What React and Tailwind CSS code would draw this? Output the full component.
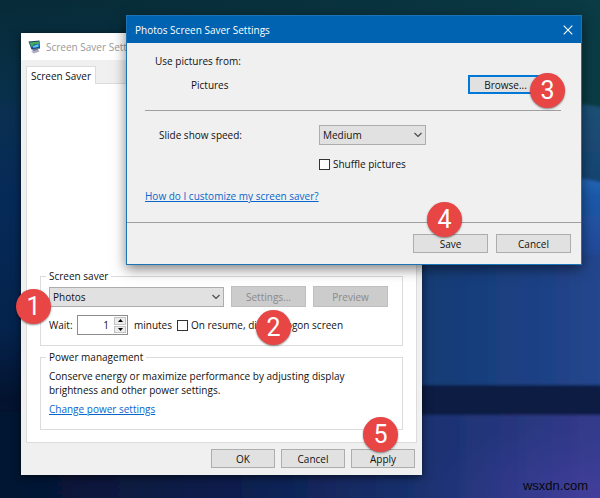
function Badge({ n, className }) {
  return (
    <span
      className={`absolute z-20 flex size-[35px] items-center justify-center rounded-full bg-[#e84545] font-[Roboto,sans-serif] text-[25px] leading-none text-white shadow-[0_1px_2px_rgba(0,0,0,0.45)] ${className}`}
    >
      {n}
    </span>
  );
}

function Button({ children, className = "w-[75px]", ...rest }) {
  return (
    <button
      type="button"
      className={`flex h-[19px] items-center justify-center border border-[#adadad] bg-[#e1e1e1] ${className}`}
      {...rest}
    >
      {children}
    </button>
  );
}

function Select({ id, value, className, ...rest }) {
  return (
    <div className={`relative ${className}`}>
      <select
        id={id}
        defaultValue={value}
        className="block h-5 w-full appearance-none border border-[#adadad] bg-[#e1e1e1] pl-[3px] leading-4"
        {...rest}
      >
        <option>{value}</option>
      </select>
      <svg
        className="pointer-events-none absolute top-[7px] right-1 h-[6px] w-[8px]"
        viewBox="0 0 8 6"
        fill="none"
        stroke="#4b4b4b"
        strokeWidth="1.2"
      >
        <path d="M.5 1 4 4.5 7.5 1" />
      </svg>
    </div>
  );
}

function Checkbox({ id, children }) {
  return (
    <div className="flex items-center gap-[3px]">
      <input
        id={id}
        type="checkbox"
        className="size-[11px] shrink-0 appearance-none border border-[#333] bg-white"
      />
      <label htmlFor={id} className="whitespace-nowrap">
        {children}
      </label>
    </div>
  );
}

function Group({ title, className, children }) {
  return (
    <fieldset className={`relative border border-[#dcdcdc] pl-2 ${className}`}>
      <legend className="-ml-[3px] px-[3px] leading-4">{title}</legend>
      {children}
    </fieldset>
  );
}

function Wallpaper() {
  return (
    <svg
      className="absolute inset-0 size-full"
      viewBox="0 0 600 498"
      preserveAspectRatio="none"
      aria-hidden="true"
    >
      <defs>
        <linearGradient id="base" x1="0" y1="0" x2="0" y2="1">
          <stop offset="0" stopColor="#072b37" />
          <stop offset=".19" stopColor="#08304a" />
          <stop offset=".22" stopColor="#0a2f50" />
          <stop offset=".4" stopColor="#062a58" />
          <stop offset=".66" stopColor="#04234c" />
          <stop offset=".8" stopColor="#03132f" />
          <stop offset="1" stopColor="#08183c" />
        </linearGradient>
        <linearGradient id="floor" x1="0" y1="0" x2="1" y2="0">
          <stop offset="0" stopColor="#04132f" />
          <stop offset=".4" stopColor="#0c1f4e" />
          <stop offset=".72" stopColor="#1b3272" />
          <stop offset="1" stopColor="#353b8c" />
        </linearGradient>
        <linearGradient id="sky" x1="0" y1="0" x2="1" y2="0">
          <stop offset="0" stopColor="#0a3540" stopOpacity="0" />
          <stop offset="1" stopColor="#0b3b45" />
        </linearGradient>
        <linearGradient id="pane" x1="0" y1="0" x2="1" y2="0">
          <stop offset="0" stopColor="#123a70" />
          <stop offset=".5" stopColor="#1a3f80" />
          <stop offset="1" stopColor="#25468e" />
        </linearGradient>
        <linearGradient id="upper" x1="0" y1="0" x2="0" y2="1">
          <stop offset="0" stopColor="#1c5076" />
          <stop offset="1" stopColor="#174272" />
        </linearGradient>
        <linearGradient id="glow" x1="0" y1="0" x2="0" y2="1">
          <stop offset="0" stopColor="#2265b8" />
          <stop offset=".2" stopColor="#1d59a8" />
          <stop offset=".8" stopColor="#234b9a" />
          <stop offset="1" stopColor="#25468e" />
        </linearGradient>
        <radialGradient id="violet" cx="1" cy="1" r="1">
          <stop offset="0" stopColor="#4a40a4" stopOpacity=".7" />
          <stop offset="1" stopColor="#3a3c98" stopOpacity="0" />
        </radialGradient>
        <filter id="soft">
          <feGaussianBlur stdDeviation="1.5" />
        </filter>
      </defs>
      <rect width="600" height="498" fill="url(#base)" />
      <rect width="600" height="110" fill="url(#sky)" />
      <path d="M575 100h25v85h-25z" fill="#0b3b45" />
      <g filter="url(#soft)">
        <path d="M575 105q14-2 30 4v84h-30z" fill="url(#upper)" />
        <path d="M570 179q18-1 35 5v81h-35z" fill="url(#glow)" />
        <path d="M400 255h210v140h-210z" fill="url(#pane)" />
        <path d="M-10 412h620v100h-620z" fill="url(#floor)" />
        <path d="M400 385h210v30h-210z" fill="#101b42" />
      </g>
      <path d="M422 417h178v81h-178z" fill="url(#violet)" />
    </svg>
  );
}

function MonitorIcon() {
  return (
    <svg className="h-[14px] w-[13px]" viewBox="0 0 13 14" aria-hidden="true">
      <path d="m.5 1.500 11-1 .5 8-8.500 1z" fill="#26455f" />
      <path d="m1.500 2.500 9.500-1v6l-7 1z" fill="#1747b5" />
      <path d="m1.500 2.500 9.500-1-.2 2.500-5 .5-2 3z" fill="#43ad58" />
      <path d="m5 6 5.500-2v3L5 7.700z" fill="#54c9e7" />
      <path d="m4 9 6-.5.500 3-5 1z" fill="#6d7d99" />
      <path d="m3 11.500 7-1.500 1.500 1.500-5.500 2z" fill="#b4adc6" />
    </svg>
  );
}

function ScreenSaverWindow() {
  return (
    <section className="absolute top-[33px] left-[21px] w-[401px] bg-[#f0f0f0] shadow-[0_2px_8px_rgba(0,0,0,0.6)]">
      <header className="flex h-[27px] items-center gap-[5px] bg-white pl-[7px] text-[#999]">
        <MonitorIcon />
        <h1>Screen Saver Settings</h1>
      </header>
      <div className="px-[5px] pt-[6px]">
        <div role="tablist" className="flex">
          <button
            type="button"
            role="tab"
            aria-selected="true"
            className="relative z-10 -mb-px h-[18px] w-[70px] border border-b-0 border-[#dcdcdc] bg-white"
          >
            Screen Saver
          </button>
        </div>
        <div className="border border-[#dcdcdc] bg-white px-[13px] pb-3">
          <div className="h-[184px]" />
          <Group title="Screen saver" className="h-[78px]">
            <div className="flex items-center gap-[7px] pt-[2px]">
              <Select
                id="saver"
                value="Photos"
                className="w-[175px]"
                aria-label="Screen saver"
              />
              <button
                type="button"
                disabled
                className="h-[21px] w-[75px] border border-[#bfbfbf] bg-[#ccc] text-[#8a8a8a]"
              >
                Settings...
              </button>
              <button
                type="button"
                disabled
                className="h-[21px] w-[75px] border border-[#bfbfbf] bg-[#ccc] text-[#8a8a8a]"
              >
                Preview
              </button>
            </div>
            <div className="flex items-center pt-2">
              <label htmlFor="wait" className="w-7">
                Wait:
              </label>
              <div className="flex h-5 w-[51px] border border-[#8c8c8c] bg-white">
                <input
                  id="wait"
                  type="text"
                  defaultValue="1"
                  className="w-[35px] pr-1 text-right leading-4"
                />
                <div className="flex w-[14px] flex-col gap-px bg-white p-px">
                  {["Increase", "Decrease"].map((name, i) => (
                    <button
                      key={name}
                      type="button"
                      aria-label={name}
                      className="flex flex-1 items-center justify-center border border-[#c4c4c4] bg-[#ececec]"
                    >
                      <svg className="h-[3px] w-[5px]" viewBox="0 0 5 3">
                        <path d={i ? "M0 0h5L2.500 3z" : "M0 3h5L2.500 0z"} />
                      </svg>
                    </button>
                  ))}
                </div>
              </div>
              <span className="w-[49px] pl-[6px]">minutes</span>
              <Checkbox id="resume">On resume, display logon screen</Checkbox>
            </div>
            <Badge n="1" className="top-[5px] -left-[25px]" />
            <Badge n="2" className="top-[26px] left-[215px]" />
          </Group>
          <Group title="Power management" className="mt-[3px] h-[81px]">
            <p className="pt-[4px] leading-[14px]">
              Conserve energy or maximize performance by adjusting display
              <br />
              brightness and other power settings.
            </p>
            <a href="#power" className="mt-1 block w-fit text-[#0a66cc] underline">
              Change power settings
            </a>
          </Group>
        </div>
      </div>
      <footer className="relative flex justify-end gap-[6px] px-[7px] pt-[6px] pb-[7px]">
        <Button className="w-16">OK</Button>
        <Button className="w-16">Cancel</Button>
        <Button className="w-16">Apply</Button>
        <Badge n="5" className="-top-[26px] right-[24px]" />
      </footer>
    </section>
  );
}

function PhotosDialog() {
  return (
    <section className="absolute top-[15px] left-[126px] z-10 w-[456px] border border-[#1b74b8] bg-[#f0f0f0] shadow-[0_4px_12px_rgba(0,0,0,0.5)]">
      <header className="flex h-[27px] items-center justify-between bg-[#0063b1] px-2 text-white">
        <h2>Photos Screen Saver Settings</h2>
        <button type="button" aria-label="Close">
          <svg
            className="size-[10px]"
            viewBox="0 0 10 10"
            stroke="white"
            strokeWidth="1.1"
          >
            <path d="m.7.7 8.600 8.600M9.300.7.700 9.300" />
          </svg>
        </button>
      </header>
      <div className="h-[179px] pr-5 pl-[18px]">
        <div className="pt-[10px] pl-[10px]">Use pictures from:</div>
        <div className="relative mt-[6px] flex h-[19px] items-center justify-between pr-[18px] pl-[46px]">
          <span>Pictures</span>
          <button
            type="button"
            className="h-[19px] w-[75px] border-2 border-[#0078d7] bg-[#e1e1e1] leading-none"
          >
            Browse...
          </button>
          <Badge n="3" className="-top-[2px] -right-[4px]" />
        </div>
        <hr className="mt-4 border-[#a0a0a0]" />
        <div className="mt-[14px] flex items-center pl-[14px]">
          <label htmlFor="speed" className="w-40">
            Slide show speed:
          </label>
          <Select id="speed" value="Medium" className="w-[107px]" />
        </div>
        <div className="mt-[11px] pl-[174px]">
          <Checkbox id="shuffle">Shuffle pictures</Checkbox>
        </div>
        <a href="#help" className="mt-4 block w-fit text-[#0a66cc] underline">
          How do I customize my screen saver?
        </a>
      </div>
      <footer className="relative flex justify-end gap-2 border-t border-[#a0a0a0] pt-[11px] pr-[10px] pb-[11px]">
        <Button>Save</Button>
        <Button>Cancel</Button>
        <Badge n="4" className="-top-[21px] right-[119px]" />
      </footer>
    </section>
  );
}

export default function App() {
  return (
    <main className="relative min-h-screen overflow-hidden bg-[#06294a] font-['Open_Sans','Noto_Sans',sans-serif] text-[10px] leading-4 text-[#111]">
      <Wallpaper />
      <ScreenSaverWindow />
      <PhotosDialog />
      <span className="absolute right-3 bottom-1 font-['Liberation_Sans',Arial,sans-serif] text-[13px] text-[#05070c]">
        wsxdn.com
      </span>
    </main>
  );
}
